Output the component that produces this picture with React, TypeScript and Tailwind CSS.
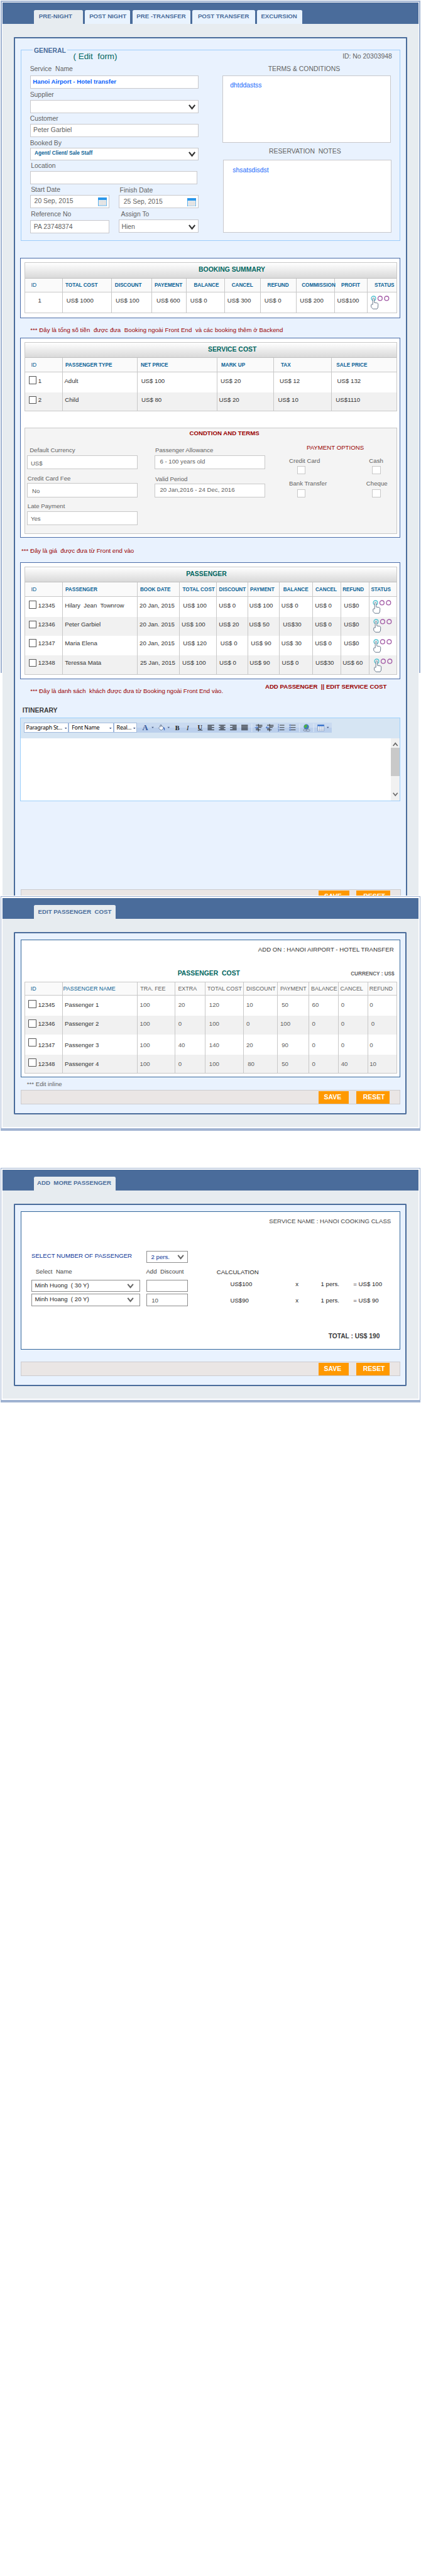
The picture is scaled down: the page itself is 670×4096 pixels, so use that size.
import React from "react";

const sans = "font-['Liberation_Sans',Arial,sans-serif]";
const INK = "text-[#333333]";
const GREY = "text-[#626262]";
const HEAD = "text-[11px] font-bold text-[#0a6296]";

type Item = [x: number, text: string, cls?: string];

type RowSpec = {
  h: number;
  pt: number;
  items: Item[];
  shade?: boolean;
  check?: number;
  status?: [x: number, y: number];
};

function Chevron({ cls }: { cls: string }) {
  return (
    <svg viewBox="0 0 15 12" className={cls} fill="none" stroke="currentColor" strokeWidth="3">
      <path d="M1.2 1.2 7.5 9 13.8 1.2" />
    </svg>
  );
}

function Calendar() {
  return (
    <svg viewBox="0 0 19 18" className="h-[18px] w-[19px]">
      <rect x="0.5" y="0.5" width="18" height="17" fill="#f6f6f6" stroke="#1b93e8" />
      <rect x="0" y="0" width="19" height="5.5" fill="#2b97ea" />
      <path
        d="M1 8.5h17M1 11.5h17M1 14.5h17M4 6v11M7 6v11M10 6v11M13 6v11M16 6v11"
        stroke="#cfcfcf"
        strokeWidth="0.8"
      />
    </svg>
  );
}

function StatusMark() {
  return (
    <svg viewBox="0 0 42 30" className="h-[30px] w-[42px] shrink-0" fill="none">
      <circle cx="6" cy="6" r="4.6" stroke="#4fc0d0" strokeWidth="1.8" />
      <circle cx="20" cy="6" r="4.6" stroke="#a25ba6" strokeWidth="1.8" />
      <circle cx="34" cy="6" r="4.6" stroke="#a25ba6" strokeWidth="1.8" />
      <path
        d="M4.3 19V7.2Q4.3 5 6 5T7.7 7.2V15L14 16Q16 16.5 15.8 19L15.4 25.5 13.5 28.5H4.6L1 24.5V19.5Q2 18.3 4.3 19Z"
        fill="#fff"
        stroke="#5a6b80"
        strokeWidth="1.2"
      />
    </svg>
  );
}

function Check({ cls }: { cls: string }) {
  return <span className={`block shrink-0 border bg-white ${cls}`} />;
}

function Grid({
  left,
  cols,
  header,
  rows,
  title,
  cls,
}: {
  left: number;
  cols: number[];
  header: RowSpec;
  rows: RowSpec[];
  title?: Item;
  cls: string;
}) {
  const line = (r: RowSpec, head: boolean, key: number) => (
    <div
      key={key}
      className={`flex ${head ? "border-b border-[#c8c8c8] bg-[#fafafa]" : r.shade ? "bg-[#f1f1f1]" : "bg-white"}`}
      style={{ height: r.h }}
    >
      {cols.map((right, i) => {
        const start = i === 0 ? left : cols[i - 1];
        const item = r.items[i];
        return (
          <div
            key={i}
            className={`flex shrink-0 items-start whitespace-pre leading-[16px] ${
              i < cols.length - 1 ? "border-r border-[#c8c8c8]" : ""
            }`}
            style={{ width: right - start }}
          >
            {i === 0 && r.check !== undefined && (
              <span style={{ marginTop: r.check, marginLeft: 60.8 - left, marginRight: -77.8 + left }}>
                <Check cls="h-[17px] w-[17px] rounded-[1px] border-[#555]" />
              </span>
            )}
            {item && (
              <span className={item[2]} style={{ paddingTop: r.pt, paddingLeft: item[0] - start - 1, width: 0 }}>
                {item[1]}
              </span>
            )}
            {i === cols.length - 1 && r.status && (
              <span style={{ marginTop: r.status[1], marginLeft: r.status[0] - start }}>
                <StatusMark />
              </span>
            )}
          </div>
        );
      })}
    </div>
  );
  return (
    <div className={`overflow-hidden border border-[#c8c8c8] text-[13px] ${cls}`}>
      {title && (
        <div
          className="h-[33px] border-b border-[#c0c0c0] bg-linear-to-b from-white to-[#d9d9d9] pt-[7px] text-[14px] leading-[16px] font-bold text-[#006660]"
          style={{ paddingLeft: title[0] - left }}
        >
          {title[1]}
        </div>
      )}
      {line(header, true, -1)}
      {rows.map((r, i) => line(r, false, i))}
    </div>
  );
}

function Label({ cls, children }: { cls: string; children: React.ReactNode }) {
  return <div className={`h-[16px] leading-[16px] whitespace-pre ${cls}`}>{children}</div>;
}

function Box({ cls, children }: { cls: string; children?: React.ReactNode }) {
  return <div className={`flex items-start border bg-white leading-[16px] whitespace-pre ${cls}`}>{children}</div>;
}

function ActionBar({ cls }: { cls: string }) {
  return (
    <div
      className={`ml-[11.8px] flex h-[31.7px] w-[812px] shrink-0 items-start justify-end border border-[#cbcbcf] bg-[#eae6e5] pt-[2px] text-[14px] leading-[26px] font-bold text-white ${cls}`}
    >
      <div className="mr-[15.5px] h-[26px] w-[65px] bg-[#ff9900] pl-[12px]">SAVE</div>
      <div className="mr-[21.5px] h-[26px] w-[72px] bg-[#ff9900] pl-[15px]">RESET</div>
    </div>
  );
}

function Tab({ cls, children }: { cls: string; children: React.ReactNode }) {
  return (
    <div className={`shrink-0 rounded-t-[3px] text-[13px] leading-[16px] font-bold whitespace-pre text-[#4a6c9b] ${cls}`}>
      {children}
    </div>
  );
}

const bookingCols = [133.2, 238.8, 324.3, 398.4, 480.5, 556.3, 632.6, 715.3, 785.3, 848];
const serviceCols = [133.2, 293.3, 464.4, 585.5, 708.4, 848];
const passengerCols = [133.2, 293.3, 383.5, 462.7, 529.3, 596.4, 667.6, 728.5, 788.7, 848];
const costCols = [134.3, 294.5, 374.9, 439.7, 521.8, 593.6, 660.7, 723.9, 786.5, 848.5];

const at = (xs: number[], texts: string[], cls?: string | string[]): Item[] =>
  xs.map((x, i) => [x, texts[i], Array.isArray(cls) ? cls[i] : cls]);

const headCls = (n: number, first: string) => [first, ...Array<string>(n - 1).fill(HEAD)];
const ID_HEAD = "text-[12px] text-[#0a6296]";
const BLUE12 = "text-[12px] text-[#0a6296]";
const GREY12 = `text-[12px] ${GREY}`;
const costCls = [INK, INK, ...Array<string>(8).fill(GREY)];

function Toolbar() {
  const select = "h-[22px] border border-[#a3bbdd] bg-white text-[12px] leading-[19px] text-black";
  const lines = (x: number, spans: number[][]) =>
    spans.map(([a, b], i) => `M${x + a} ${5.5 + i * 2.5}H${x + b}`).join("");
  return (
    <div className="flex h-[43px] items-start bg-[#d6e5f3] pt-[10px] pl-[6px] font-['Noto_Sans','Open_Sans',sans-serif] whitespace-pre">
      <div className={`${select} flex w-[96.5px] pl-[4px]`}>
        <span className="w-[82px] tracking-[-0.38px]">Paragraph St...</span>
        <Caret />
      </div>
      <div className={`${select} flex w-[96px] pl-[5px]`}>
        <span className="w-[81px] tracking-[-0.3px]">Font Name</span>
        <Caret />
      </div>
      <div className={`${select} flex w-[50px] pl-[5px]`}>
        <span className="w-[36px] tracking-[-0.3px]">Real...</span>
        <Caret />
      </div>
      <div className="h-[22px] w-[416px] bg-linear-to-b from-[#c9daf0] from-50% to-[#bacfec] to-50%">
        <svg viewBox="0 0 416 22" className="block h-[22px] w-[416px]">
          <g fontFamily="'Liberation Serif', serif" fontWeight="bold">
            <text x="11.5" y="16.5" fontSize="17" fill="#36569a">A</text>
            <text x="81.5" y="15.5" fontSize="14" fill="#222">B</text>
            <text x="106" y="15.5" fontSize="14" fontStyle="italic" fontWeight="normal" fill="#222">I</text>
            <text x="129.5" y="14.5" fontSize="14" fill="#222">U</text>
          </g>
          <path d="M130 16.2h10" stroke="#222" strokeWidth="1.2" />
          <path d="M31 9h5l-2.5 3zM65 9h5l-2.5 3zM405.5 9h5l-2.5 3z" fill="#4c5f88" />
          <path d="M46 11.5 51.5 6l6 5.5-6 5z" fill="#f4f6fa" stroke="#5c6c88" />
          <path d="M49.5 10V5.5q1.5-2 3 0V9" fill="none" stroke="#5c6c88" />
          <path d="M56 9q4 1 3.2 8-2-1-2.4-5z" fill="#2f62c0" />
          <path
            d={
              lines(151, [[0, 14], [0, 9], [0, 14], [0, 9], [0, 14]]) +
              lines(175, [[0, 14], [3, 11], [0, 14], [3, 11], [0, 14]]) +
              lines(199, [[0, 14], [5, 14], [0, 14], [5, 14], [0, 14]]) +
              lines(223, [[0, 14], [0, 14], [0, 14], [0, 14], [0, 14]])
            }
            stroke="#111"
            strokeWidth="1.3"
          />
          <path
            d={
              lines(252, [[2, 16], [8, 16], [8, 14], [2, 7], [2, 12]]) +
              lines(276, [[2, 16], [8, 16], [8, 14], [2, 7], [2, 12]]) +
              "M259.5 3v16M283.5 3v16M305 5.5h10M305 10.5h10M305 15.5h10M329 5.5h10M329 10.5h10M329 15.5h10"
            }
            stroke="#222"
            strokeWidth="1.2"
          />
          <path d="M252 10.5h6M255.5 8l2.5 2.5-2.5 2.5M282 10.5h-6M278.5 8l-2.5 2.5 2.5 2.5" fill="none" stroke="#2f62c0" strokeWidth="1.3" />
          <path d="M302.5 3v4M301.2 8.5h2v2h-2M301.2 14h2v4h-2M326 4.5h2.5v2H326zM326 9.5h2.5v2H326zM326 14.5h2.5v2H326z" fill="none" stroke="#4a6bb0" />
          <path d="M245.5 2v18M347.5 2v18M377.5 2v18" stroke="#dbe7f6" strokeWidth="1.5" />
          <circle cx="362" cy="9" r="5.6" fill="#3f77c4" />
          <path d="M358 6q3-3 6-1l-1 4-3 3-3-3zM365 10l2-1-1 4z" fill="#4fb33c" />
          <rect x="356" y="14" width="6.5" height="4" rx="2" fill="none" stroke="#7b8698" strokeWidth="1.3" />
          <rect x="361.5" y="14.5" width="8" height="4" rx="2" fill="none" stroke="#7b8698" strokeWidth="1.3" />
          <rect x="386" y="5" width="14" height="12.5" fill="#fff" stroke="#7f96bd" />
          <rect x="386" y="4.5" width="14" height="3.5" fill="#3c77cf" />
          <path d="M386 11h14M386 14.3h14M390.7 8v9.5M395.3 8v9.5" stroke="#8fa5c8" strokeWidth="0.9" />
        </svg>
      </div>
    </div>
  );
}

function Caret() {
  return (
    <svg viewBox="0 0 5 3" className="mt-[9px] h-[3px] w-[5px] shrink-0">
      <path d="M0 0h5L2.5 3z" fill="#3f5584" />
    </svg>
  );
}

function GeneralForm() {
  const field = "border-[#c8c8cc] bg-white";
  return (
    <fieldset className="ml-[11.5px] h-[417px] w-[812px] border border-[#9dcdfa]">
      <legend className="ml-[24px] h-[20px] px-[3px] pt-[4px] text-[14px] leading-[16px] font-bold text-[#4a6c9b]">
        GENERAL
      </legend>
      <div className="-mt-[6px] flex h-[20px] leading-[20px] whitespace-pre">
        <span className="ml-[111px] text-[18px] text-[#006660]">( Edit  form)</span>
        <span className="mr-[17px] ml-auto">ID: No 20303948</span>
      </div>
      <div className="flex">
        <div className="ml-[18.5px] w-[360px]">
          <Label cls="mt-[9px]">Service  Name</Label>
          <Box cls={`mt-[5px] h-[28px] ${field} pt-[3.5px] pl-[5px] text-[13px] font-bold text-[#0b62fb]`}>Hanoi Airport - Hotel transfer</Box>
          <Label cls="mt-[6px]">Supplier</Label>
          <Box cls={`mt-[2px] h-[28px] ${field} justify-end pt-[9px] pr-[5px]`}>
            <Chevron cls="h-[12px] w-[15px] text-[#333]" />
          </Box>
          <Label cls="mt-[5px]">Customer</Label>
          <Box cls={`mt-[3px] h-[28px] ${field} pt-[4px] pl-[6px]`}>Peter Garbiel</Box>
          <Label cls="mt-[5px]">Booked By</Label>
          <Box cls={`mt-[1px] h-[28px] ${field} justify-between pt-[3px] pr-[5px] pl-[8.5px] text-[11px] font-bold text-[#0a6296]`}>
            Agent/ Client/ Sale Staff
            <Chevron cls="mt-[4px] h-[12px] w-[15px] text-[#333]" />
          </Box>
          <Label cls="mt-[4px] ml-[2px]">Location</Label>
          <Box cls={`mt-[2px] h-[28px] w-[358px] ${field}`} />
          <div className="flex gap-[20px]">
            <div className="w-[170px]">
              <Label cls="mt-[5px] ml-[2px]">Start Date</Label>
              <Box cls={`mt-[2px] h-[28px] ${field} justify-between pt-[5px] pr-[4px] pl-[8px]`}>
                20 Sep, 2015
                <Calendar />
              </Box>
              <Label cls="mt-[6px] ml-[2px]">Reference No</Label>
              <Box cls={`mt-[4px] h-[28px] ${field} pt-[5px] pl-[7px]`}>PA 23748374</Box>
            </div>
            <div className="w-[170px]">
              <Label cls="mt-[6px] ml-[2px]">Finish Date</Label>
              <Box cls={`mt-[2px] h-[28px] ${field} justify-between pt-[4.5px] pr-[4px] pl-[9px]`}>
                25 Sep, 2015
                <Calendar />
              </Box>
              <Label cls="mt-[5px] ml-[4.5px]">Assign To</Label>
              <Box cls={`mt-[3px] h-[28px] ${field} justify-between pt-[6px] pr-[5px] pl-[4.5px]`}>
                Hien
                <Chevron cls="mt-[3px] h-[12px] w-[15px] text-[#333]" />
              </Box>
            </div>
          </div>
        </div>
        <div className="ml-[52px] w-[361px]">
          <Label cls="mt-[9px] ml-[97px]">{"TERMS & CONDITIONS"}</Label>
          <Box cls={`mt-[5px] h-[144px] w-[360px] ${field} pt-[11.5px] pl-[14.5px] text-[#1768fb]`}>dhtddastss</Box>
          <Label cls="mt-[11px] ml-[99px]">RESERVATION  NOTES</Label>
          <Box cls={`mt-[9px] ml-[1px] h-[156px] w-[360px] ${field} pt-[14px] pl-[19px] text-[#1768fb]`}>shsatsdisdst</Box>
        </div>
      </div>
    </fieldset>
  );
}

function Terms() {
  const input = "h-[30px] w-[237px] border-[#c8c8c8]";
  const tick = "h-[18px] w-[18px] border-[#c8c8c8]";
  return (
    <div className={`mt-[34.5px] ml-[7.5px] h-[227px] w-[796.5px] border border-[#c8c8c8] bg-[#f4f4f4] text-[13px] ${GREY}`}>
      <Label cls="mt-[3px] ml-[351.5px] font-bold text-[#990000]">CONDTION AND TERMS</Label>
      <div className="flex">
        <div className="ml-[4px] w-[237px]">
          <Label cls="mt-[21px] ml-[6px]">Default Currency</Label>
          <Box cls={`mt-[2px] ${input} pt-[8.5px] pl-[7px]`}>US$</Box>
          <Label cls="mt-[12px] ml-[1.5px]">Credit Card Fee</Label>
          <Box cls={`mt-[2px] ${input} pt-[7px] pl-[10px]`}>No</Box>
          <Label cls="mt-[11px] ml-[1.5px]">Late Payment</Label>
          <Box cls={`mt-[3px] ${input} pt-[7px] pl-[7px]`}>Yes</Box>
        </div>
        <div className="ml-[35.5px] w-[237px]">
          <Label cls="mt-[21px] ml-[2px]">Passenger Allowance</Label>
          <Box cls={`mt-[2px] ${input} pt-[4px] pl-[10.5px]`}>6 - 100 years old</Box>
          <Label cls="mt-[13px] ml-[2px]">Valid Period</Label>
          <Box cls={`mt-[2px] ${input} pt-[4px] pl-[10.5px]`}>20 Jan,2016 - 24 Dec, 2016</Box>
        </div>
        <div className="ml-[51px]">
          <Label cls="mt-[15px] ml-[37.5px] text-[#990000]">PAYMENT OPTIONS</Label>
          <div className="mt-[12px] flex">
            <div className="w-[165px]">
              <Label cls="">Credit Card</Label>
              <Check cls={`mt-[3px] ml-[17.5px] ${tick}`} />
              <Label cls="mt-[12px]">Bank Transfer</Label>
              <Check cls={`mt-[4px] ml-[17.5px] ${tick}`} />
            </div>
            <div>
              <Label cls="ml-[6px]">Cash</Label>
              <Check cls={`mt-[3px] ml-[12.5px] ${tick}`} />
              <Label cls="mt-[12px]">Cheque</Label>
              <Check cls={`mt-[4px] ml-[12.5px] ${tick}`} />
            </div>
          </div>
        </div>
      </div>
    </div>
  );
}

function BookingFrame() {
  return (
    <section className="pt-[2px]">
      <div className="ml-[2px] h-[2px] w-[896px] bg-[#9fb2d1]" />
      <div className="flex h-[1908px] items-start overflow-hidden">
        <div className="ml-[2px] h-[1433px] w-[2px] bg-[#9fb2d1]" />
        <div className="mt-[2px] ml-[2px] w-[888px] bg-[#e7ecf0]">
          <div className="flex h-[45px] items-end bg-[#4a6c9b] pl-[67px]">
            <Tab cls="h-[30px] w-[104px] bg-[#e7ecf0] pt-[6px] pl-[10px]">PRE-NIGHT</Tab>
            <Tab cls="ml-[5px] h-[29px] w-[96px] bg-[#e9f3fe] pt-[5px] pl-[9px]">POST NIGHT</Tab>
            <Tab cls="ml-[5px] h-[29px] w-[123.5px] bg-[#e9f3fe] pt-[5px] pl-[9px]">PRE -TRANSFER</Tab>
            <Tab cls="ml-[4.5px] h-[29px] w-[134px] bg-[#e9f3fe] pt-[5px] pl-[12px]">POST TRANSFER</Tab>
            <Tab cls="ml-[5px] h-[29px] w-[96px] bg-[#e9f3fe] pt-[5px] pl-[8px]">EXCURSION</Tab>
          </div>
          <div className={`mt-[28px] ml-[24px] h-[1900px] w-[840px] rounded-t-[2px] border-[2.7px] border-b-0 border-[#4a6c9b] bg-[#e9f2fe] pt-[15.5px] text-[14px] ${GREY}`}>
            <GeneralForm />

            <div className="mt-[37px] ml-[10.5px] h-[129px] w-[813px] border border-[#4a6ca8] bg-white">
              <Grid
                cls="mt-[7.5px] ml-[7.5px] h-[109.5px] w-[796.5px]"
                left={52.6}
                cols={bookingCols}
                title={[423.7, "BOOKING SUMMARY"]}
                header={{
                  h: 30,
                  pt: 8,
                  items: at(
                    [66.6, 140, 245.7, 330.7, 414.5, 495.4, 571.8, 645.2, 729.6, 800.8],
                    ["ID", "TOTAL COST", "DISCOUNT", "PAYEMENT", "BALANCE", "CANCEL", "REFUND", "COMMISSION", "PROFIT", "STATUS"],
                    headCls(10, ID_HEAD),
                  ),
                }}
                rows={[
                  {
                    h: 45,
                    pt: 10,
                    items: at(
                      [81.5, 142.4, 247.4, 334.7, 407, 486.2, 565.4, 641.2, 721],
                      ["1", "US$ 1000", "US$ 100", "US$ 600", "US$ 0", "US$ 300", "US$ 0", "US$ 200", "US$100"],
                      INK,
                    ),
                    status: [792, 6.5],
                  },
                ]}
              />
            </div>

            <Label cls="mt-[17.5px] ml-[32px] text-[13px] tracking-[0.08px] text-[#990000]">
              *** Đây là tổng số tiền  được đưa  Booking ngoài Front End  và các booking thêm ở Backend
            </Label>

            <div className="mt-[7.8px] ml-[10.5px] h-[426.4px] w-[813px] border border-[#4a6ca8] bg-white">
              <Grid
                cls="mt-[7.5px] ml-[7.5px] h-[148px] w-[796.5px]"
                left={52.6}
                cols={serviceCols}
                title={[443.8, "SERVICE COST"]}
                header={{
                  h: 30,
                  pt: 8,
                  items: at(
                    [66.6, 140, 301, 473, 600.5, 719.3],
                    ["ID", "PASSENGER TYPE", "NET PRICE", "MARK UP", "TAX", "SALE PRICE"],
                    headCls(6, ID_HEAD),
                  ),
                }}
                rows={[
                  {
                    h: 43,
                    pt: 11,
                    check: 9,
                    items: at([82, 137.8, 302, 471.8, 598, 721], ["1", "Adult", "US$ 100", "US$ 20", "US$ 12", "US$ 132"], INK),
                  },
                  {
                    h: 41,
                    pt: 9,
                    check: 8,
                    shade: true,
                    items: at([82, 139, 302.5, 468.4, 594.7, 718], ["2", "Child", "US$ 80", "US$ 20", "US$ 10", "US$1110"], INK),
                  },
                ]}
              />
              <Terms />
            </div>

            <Label cls="mt-[21px] ml-[13px] text-[13px] text-[#990000]">*** Đây là giá  được đưa từ Front end vào</Label>

            <div className="mt-[16.3px] ml-[10.5px] h-[249.5px] w-[813px] border border-[#4a6ca8] bg-white">
              <Grid
                cls="mt-[7.5px] ml-[7.5px] h-[231px] w-[796.5px]"
                left={52.6}
                cols={passengerCols}
                title={[397, "PASSENGER"]}
                header={{
                  h: 30,
                  pt: 8,
                  items: at(
                    [66.6, 140, 299.7, 390.4, 468.4, 535, 605.6, 674.5, 732.5, 793.3],
                    ["ID", "PASSENGER", "BOOK DATE", "TOTAL COST", "DISCOUNT", "PAYMENT", "BALANCE", "CANCEL", "REFUND", "STATUS"],
                    headCls(10, ID_HEAD),
                  ),
                }}
                rows={[
                  {
                    h: 43,
                    pt: 11,
                    check: 9,
                    items: at(
                      [82, 139, 298.5, 391.5, 468, 533.3, 601.6, 673.4, 735.4],
                      ["12345", "Hilary  Jean  Townrow", "20 Jan, 2015", "US$ 100", "US$ 0", "US$ 100", "US$ 0", "US$ 0", "US$0"],
                      INK,
                    ),
                    status: [795.5, 7],
                  },
                  {
                    h: 40,
                    pt: 9,
                    check: 8,
                    shade: true,
                    items: at(
                      [82, 139, 298.5, 388.6, 468, 533, 605, 673.4, 735.4],
                      ["12346", "Peter Garbiel", "20 Jan. 2015", "US$ 100", "US$ 20", "US$ 50", "US$30", "US$ 0", "US$0"],
                      INK,
                    ),
                    status: [797, 4.5],
                  },
                  {
                    h: 42,
                    pt: 9,
                    check: 8,
                    items: at(
                      [82, 139, 298.5, 391.5, 471.3, 536.7, 601.6, 673.4, 735.4],
                      ["12347", "Maria Elena", "20 Jan, 2015", "US$ 120", "US$ 0", "US$ 90", "US$ 30", "US$ 0", "US$0"],
                      INK,
                    ),
                    status: [797, 7.5],
                  },
                  {
                    h: 41,
                    pt: 9,
                    check: 8,
                    shade: true,
                    items: at(
                      [82, 139, 299.7, 389.8, 469, 534, 602.8, 674.5, 732.5],
                      ["12348", "Teressa Mata", "25 Jan, 2015", "US$ 100", "US$ 0", "US$ 90", "US$ 0", "US$30", "US$ 60"],
                      INK,
                    ),
                    status: [798, 6.5],
                  },
                ]}
              />
            </div>

            <div className="mt-[8px] flex items-start text-[13px] text-[#990000]">
              <Label cls="mt-[9.5px] ml-[32px] w-[502px]">*** Đây là danh sách  khách được đưa từ Booking ngoài Front End vào.</Label>
              <Label cls="font-bold">ADD PASSENGER  || EDIT SERVICE COST</Label>
            </div>

            <Label cls="mt-[26px] ml-[15.5px] font-bold text-[#3a3a3a]">ITINERARY</Label>
            <div className="mt-[6px] ml-[10.5px] h-[179px] w-[813px] overflow-hidden border border-[#9ccffb] bg-white">
              <Toolbar />
              <div className="ml-auto flex h-[134px] w-[20px] flex-col items-center bg-[#f1f1f1] text-[#6a6a6a]">
                <Chevron cls="mt-[8px] h-[9px] w-[14px] rotate-180" />
                <div className="mt-[4px] h-[60px] w-[20px] bg-[#c9c9c9]" />
                <Chevron cls="mt-[35px] h-[9px] w-[14px]" />
              </div>
            </div>

            <ActionBar cls="mt-[188px]" />
          </div>
        </div>
        <div className="ml-[2px] h-[1433px] w-[2px] bg-[#9fb2d1]" />
      </div>
    </section>
  );
}

function CostFrame() {
  const row = (h: number, pt: number, check: number, shade: boolean, xs: number[], texts: string[]): RowSpec => ({
    h, pt, check, shade, items: at(xs, texts, costCls),
  });
  return (
    <section className="mt-[2px] ml-[2px] flex h-[500.5px] w-[896px] flex-col border-2 border-b-[6px] border-[#9fb2d1] bg-white p-[2px]">
      <div className="grow bg-[#e7ecf0]">
        <div className="flex h-[45px] items-end bg-[#4a6c9b] pl-[67px]">
          <Tab cls="h-[30px] w-[175px] bg-[#e7ecf0] pt-[6.5px] pl-[9px]">EDIT PASSENGER  COST</Tab>
        </div>
        <div className={`mt-[28.5px] ml-[24px] h-[389.3px] w-[840px] rounded-[2px] border-[2.7px] border-[#4a6c9b] bg-[#e9f2fe] pt-[12.3px] text-[13px] ${GREY}`}>
          <div className="ml-[11.8px] h-[295.4px] w-[812px] border border-[#33669a] bg-white">
            <Label cls="mt-[13px] ml-[506.5px] text-[#333]">ADD ON : HANOI AIRPORT - HOTEL TRANSFER</Label>
            <div className="mt-[34.7px] flex">
              <Label cls="ml-[334.5px] w-[370px] text-[14px] font-bold text-[#006660]">PASSENGER  COST</Label>
              <Label cls="mt-[1px] text-[11px] font-bold">CURRENCY : US$</Label>
            </div>
            <Grid
              cls="mt-[8px] ml-[7px] h-[197.2px] w-[796.5px]"
              left={53.5}
              cols={costCols}
              header={{
                h: 29.5,
                pt: 7.2,
                items: at(
                  [66.6, 136, 301, 381.7, 444.3, 527.6, 600, 666, 728.5, 790.5],
                  ["ID", "PASSENGER NAME", "TRA. FEE", "EXTRA", "TOTAL COST", "DISCOUNT", "PAYMENT", "BALANCE", "CANCEL", "REFUND"],
                  [BLUE12, BLUE12, ...Array<string>(8).fill(GREY12)],
                ),
              }}
              rows={[
                row(43, 11.3, 9, false, [82.5, 139.5, 300, 382, 448, 527.5, 603, 668, 730, 791], ["12345", "Passenger 1", "100", "20", "120", "10", "50", "60", "0", "0"]),
                row(40, 8.4, 8, true, [82.5, 139.5, 300, 382, 448, 527.5, 600, 668, 730, 794.5], ["12346", "Passenger 2", "100", "0", "100", "0", "100", "0", "0", "0"]),
                row(42, 14.5, 8, false, [82.5, 139.5, 300, 382, 448, 527.5, 603, 668, 730, 791], ["12347", "Passenger 3", "100", "40", "140", "20", "90", "0", "0", "0"]),
                row(42, 12.5, 9, true, [82.5, 139.5, 300, 382, 448, 530.5, 603, 668, 730, 791], ["12348", "Passenger 4", "100", "0", "100", "80", "50", "0", "40", "10"]),
              ]}
            />
          </div>
          <Label cls="mt-[5.6px] ml-[25.5px]">*** Edit inline</Label>
          <ActionBar cls="mt-[4.5px]" />
        </div>
      </div>
    </section>
  );
}

function AddFrame() {
  const box = "h-[26px] border-[#8e8e8e]";
  const person = (name: string, discount: string, cls: string) => (
    <div className={`flex ${cls}`}>
      <Box cls={`w-[233px] justify-between ${box} pt-[3px] pr-[12px] pl-[6px]`}>
        {name}
        <Chevron cls="mt-[4px] h-[11px] w-[15px] text-[#666]" />
      </Box>
      <Box cls={`ml-[13px] w-[89px] ${box} pt-[5px] pl-[9.5px] text-[#555]`}>{discount}</Box>
    </div>
  );
  const sum = (price: string, total: string, cls: string) => (
    <div className={`ml-[29px] flex leading-[16px] ${cls}`}>
      <span className="w-[139.5px]">{price}</span>
      <span className="w-[54px]">x</span>
      <span className="w-[69.5px]">1 pers.</span>
      <span>{total}</span>
    </div>
  );
  return (
    <section className="mt-[80px] ml-[2px] flex h-[500.3px] w-[896px] flex-col border-2 border-b-[6px] border-[#9fb2d1] bg-white p-[2px]">
      <div className="grow bg-[#e7ecf0]">
        <div className="flex h-[44.8px] items-end bg-[#4a6c9b] pl-[67px]">
          <Tab cls="h-[30px] w-[175px] bg-[#e7ecf0] pt-[6.2px] pl-[7px]">ADD  MORE PASSENGER</Tab>
        </div>
        <div className="mt-[28px] ml-[24px] h-[389.8px] w-[840px] rounded-[2px] border-[2.7px] border-[#4a6c9b] bg-[#e9f2fe] pt-[12.7px] text-[13px] whitespace-pre text-[#1f1f1f]">
          <div className="ml-[11.8px] h-[295.5px] w-[812px] border border-[#33669a] bg-white">
            <Label cls="mt-[12.7px] ml-[530px] text-[#444]">SERVICE NAME : HANOI COOKING CLASS</Label>
            <div className="mt-[55px] flex items-start text-[#0b3598]">
              <Label cls="mt-[2.5px] ml-[22px] w-[245.5px]">SELECT NUMBER OF PASSENGER</Label>
              <Box cls={`w-[89px] justify-between ${box} pt-[4px] pr-[6px] pl-[9px]`}>
                2 pers.
                <Chevron cls="mt-[3px] h-[11px] w-[15px] text-[#666]" />
              </Box>
            </div>
            <div className="flex">
              <div className="ml-[22px] w-[335px]">
                <div className="mt-[11px] flex text-[#444]">
                  <Label cls="ml-[9px] w-[236px]">Select  Name</Label>
                  <Label cls="">Add  Discount</Label>
                </div>
                {person("Minh Huong  ( 30 Y)", "", "mt-[9px]")}
                {person("Minh Hoang  ( 20 Y)", "10", "mt-[4px]")}
              </div>
              <div className="ml-[61px]">
                <Label cls="mt-[11.8px]">CALCULATION</Label>
                {sum("US$100", "= US$ 100", "mt-[9.1px]")}
                {sum("US$90", "= US$ 90", "mt-[19.8px]")}
                <Label cls="mt-[60px] ml-[239px] text-[13.7px] font-bold text-[#3a3a3a]">TOTAL : US$ 190</Label>
              </div>
            </div>
          </div>
          <ActionBar cls="mt-[26px]" />
        </div>
      </div>
    </section>
  );
}

export default function App() {
  return (
    <main className={`h-[5500px] w-[900px] overflow-hidden bg-white [zoom:0.7446] ${sans}`}>
      <BookingFrame />
      <CostFrame />
      <AddFrame />
    </main>
  );
}
